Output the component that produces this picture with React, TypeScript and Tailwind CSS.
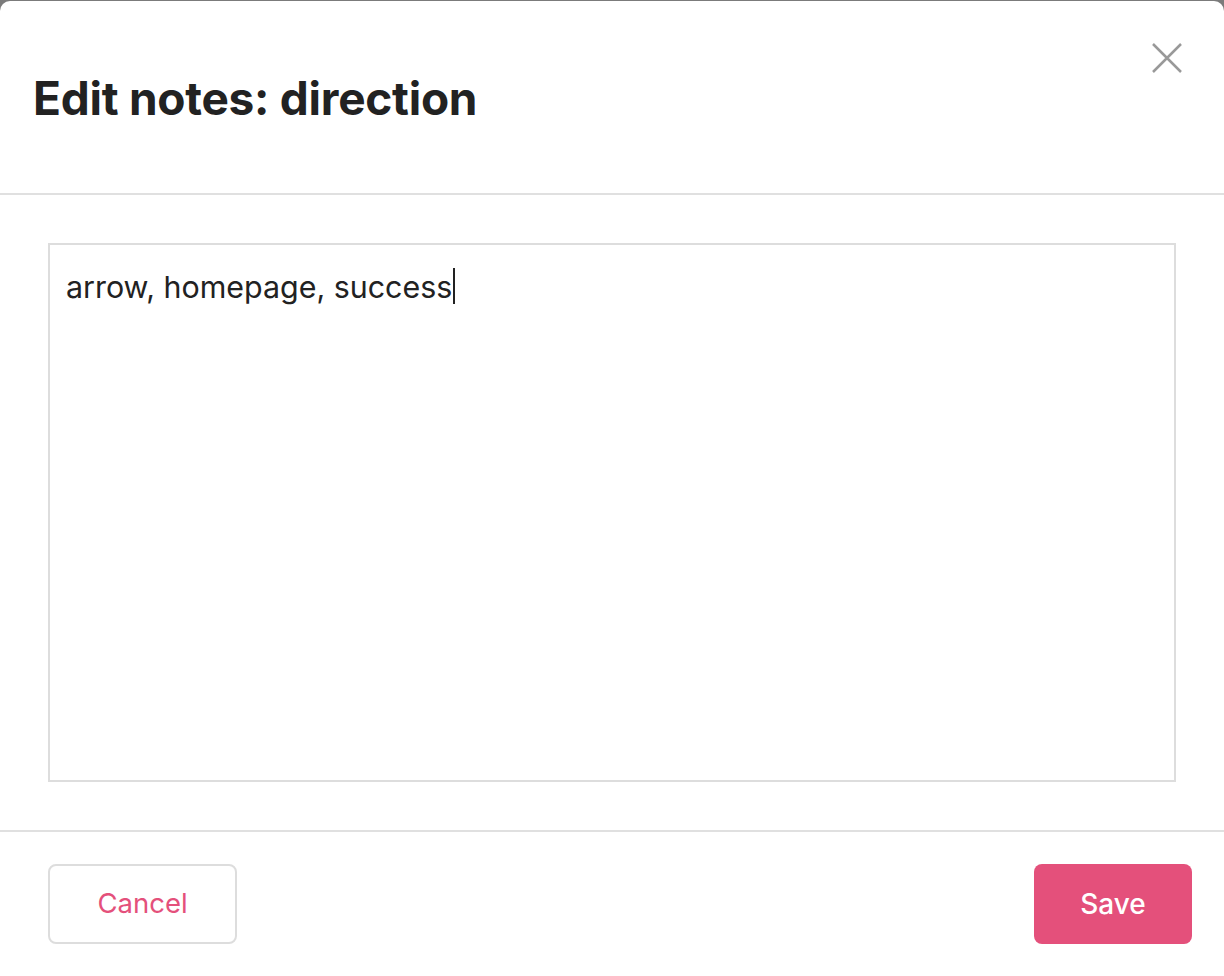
import React from "react";

const App = () => {
  return (
    <div className="h-[976px] w-[1224px] overflow-hidden bg-[#7b7b7b] pt-px font-['Inter',sans-serif]">
      <div className="flex h-[990px] flex-col rounded-t-[10px] bg-white">
        <div className="relative flex h-[194px] items-center border-b-2 border-[#e0e0e0] px-[33px] pt-[2px]">
          <h1 className="text-[46px] font-bold tracking-[-0.25px] text-[#222]">
            Edit notes: direction
          </h1>
          <button className="absolute right-[40px] top-[40px] text-[#999]">
            <svg width="34" height="34" viewBox="0 0 34 34" fill="none" stroke="currentColor" strokeWidth="2.5">
              <path d="M3 3L31 31M31 3L3 31" />
            </svg>
          </button>
        </div>
        <div className="border-b-2 border-[#e0e0e0] px-[48px] pb-[48px] pt-[48px]">
          <div className="h-[539px] border-2 border-[#ddd] px-[16px] pt-[17px] text-[30.4px] text-[#222]">
            arrow, homepage, success
            <span className="ml-px inline-block h-[36px] w-[2px] translate-y-[6px] bg-[#222]" />
          </div>
        </div>
        <div className="flex items-center justify-between pl-[48px] pr-[32px] pt-[32px]">
          <button className="h-[80px] w-[189px] rounded-lg border-2 border-[#ddd] text-[27.5px] text-[#e4507b]">
            Cancel
          </button>
          <button className="h-[80px] w-[158px] rounded-lg bg-[#e4507b] text-[28px] font-medium text-white">
            Save
          </button>
        </div>
      </div>
    </div>
  );
};

export default App;
